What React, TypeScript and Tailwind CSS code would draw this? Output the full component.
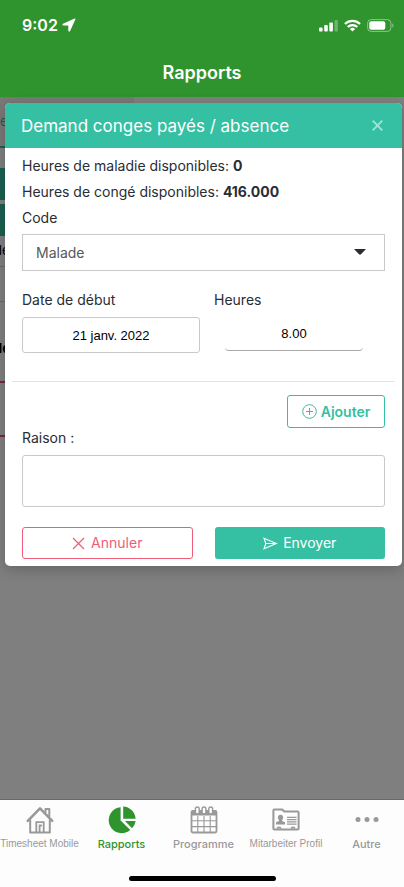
import type { ReactNode } from "react";

const CalendarIcon = () => (
  <svg width="28" height="28" viewBox="0 0 28 28" fill="none" stroke="currentColor">
    <rect x="1.5" y="5" width="25" height="21.5" rx="1.5" strokeWidth="1.8" />
    <path d="M1.5 5h25v4h-25z" fill="currentColor" strokeWidth="1" />
    <path d="M2 14.8h24M2 20.6h24M7.8 10v16M14 10v16M20.2 10v16" strokeWidth="1.1" />
    <g fill="white" strokeWidth="1.4">
      <rect x="5.4" y="1" width="3.8" height="7" rx="1.9" />
      <rect x="12.1" y="1" width="3.8" height="7" rx="1.9" />
      <rect x="18.8" y="1" width="3.8" height="7" rx="1.9" />
    </g>
  </svg>
);

const HouseIcon = () => (
  <svg width="28" height="28" viewBox="0 0 28 28" fill="none" stroke="currentColor" strokeLinejoin="round" strokeLinecap="round">
    <path d="M1.8 14.8 14 2.4l12.2 12.4" strokeWidth="2.6" />
    <path d="M4.2 14v12.4h19.6V14M19.5 6V3h3.8v7.5" strokeWidth="2" />
    <path d="M10.3 26V16.2h7.4V26M13.6 26v-6.5h1.6" strokeWidth="1.8" strokeLinejoin="miter" />
  </svg>
);

const PieIcon = () => (
  <svg width="28" height="28" viewBox="0 0 28 28" fill="currentColor">
    <path d="M12.6 1.2v13.2l9.7 9.5A13 13 0 1 1 12.6 1.2z" />
    <path d="M15.2.6A13 13 0 0 1 27.6 12.8H15.2z" />
    <path d="M17 15h10.6a13 13 0 0 1-3.6 7.3z" />
  </svg>
);

const CardIcon = () => (
  <svg width="28" height="28" viewBox="0 0 28 28" fill="none" stroke="currentColor">
    <path d="M1.4 4.4q0-1 1-1h7.4l2.8 2.2h13q1 0 1 1v15.9q0 1-1 1H2.4q-1 0-1-1z" strokeWidth="2" strokeLinejoin="round" />
    <path d="M15 11.3h9.5M15 13.6h9.5M15 15.9h9.5M15 18.2h9.5" strokeWidth="1.3" />
    <path d="M8.5 8.8c1.7 0 2.6 1.1 2.6 2.7 0 1.2-.5 2-1 2.6v1l3 1.2v2.2H4v-2.2l3-1.2v-1c-.6-.6-1.1-1.4-1.1-2.6 0-1.6.9-2.7 2.6-2.7z" fill="currentColor" stroke="none" />
    <path d="M5 22.5q0-1.5 2-1.5t2 1.5M19 22.5q0-1.5 2-1.5t2 1.5" strokeWidth="1.2" fill="currentColor" />
  </svg>
);

const DotsIcon = () => (
  <svg width="28" height="28" viewBox="0 0 28 28" fill="currentColor">
    <circle cx="5" cy="13.5" r="2.5" />
    <circle cx="14" cy="13.5" r="2.5" />
    <circle cx="23" cy="13.5" r="2.5" />
  </svg>
);

const tabs: { label: string; icon: ReactNode; active?: boolean; long?: boolean }[] = [
  { label: "Timesheet Mobile", icon: <HouseIcon />, long: true },
  { label: "Rapports", icon: <PieIcon />, active: true },
  { label: "Programme", icon: <CalendarIcon /> },
  { label: "Mitarbeiter Profil", icon: <CardIcon />, long: true },
  { label: "Autre", icon: <DotsIcon /> },
];

function StatusBar() {
  return (
    <div className="flex h-[50px] items-center justify-between pr-[10px] pl-[22px]">
      <div className="flex items-center gap-1 text-base leading-5 font-semibold">
        <span>9:02</span>
        <svg width="14" height="14" viewBox="0 0 14 14" fill="currentColor">
          <path d="M12.6.6 1 5.7c-1 .5-.8 1.7.3 1.7h5v5.1c0 1.1 1.3 1.4 1.8.4l5.2-11.4c.4-.8 0-1.3-.7-.9z" />
        </svg>
      </div>
      <div className="flex items-center gap-[6px]">
        <svg width="19" height="13" viewBox="0 0 19 13" fill="currentColor">
          <rect x="0" y="8.5" width="3.6" height="4" rx="1" />
          <rect x="5.2" y="6" width="3.6" height="6.5" rx="1" />
          <rect x="10.3" y="3.5" width="3.6" height="9" rx="1" />
          <rect x="15.5" y="1" width="3.4" height="11.5" rx="1" opacity=".3" />
        </svg>
        <svg width="17" height="13" viewBox="0 0 17 13" fill="none" stroke="currentColor" strokeWidth="2.3">
          <path d="M1 5a10.6 10.6 0 0 1 15 0M3.8 8a6.6 6.6 0 0 1 9.4 0" />
          <path d="M8.5 12.6 5.9 10a3.7 3.7 0 0 1 5.2 0z" fill="currentColor" stroke="none" />
        </svg>
        <svg width="27" height="13" viewBox="0 0 27 13" fill="none">
          <rect x=".6" y=".6" width="23.3" height="11.8" rx="3.6" stroke="white" strokeOpacity=".45" />
          <rect x="2.3" y="2.3" width="16" height="8.4" rx="2" fill="white" />
          <path d="M25.3 4.3c1.5.8 1.5 3.6 0 4.4z" fill="white" fillOpacity=".5" />
        </svg>
      </div>
    </div>
  );
}

function ReportPage() {
  return (
    <div aria-hidden="true" className="flex h-full flex-col overflow-hidden bg-white pr-[7px] text-[13px] leading-5 whitespace-nowrap">
      <div className="flex h-[51px] w-[134px] flex-col justify-end border-b-2 border-[#35bfa3] bg-[#f5efef] pb-[15px] text-[#35bfa3]">e</div>
      <div className="mt-5 h-8 bg-[#35bfa3]" />
      <div className="mt-1 h-8 bg-[#35bfa3]" />
      <div className="h-[31px] border-b border-gray-300 pt-1 -indent-[6px]">de</div>
      <div className="h-[35px] border-b border-gray-300" />
      <div className="h-[81px] border-b-2 border-[#f0506e] pt-9 font-bold -indent-[6px]">de</div>
      <div className="h-[54px] border-b-2 border-[#f0506e]" />
    </div>
  );
}

function AbsenceDialog() {
  return (
    <form
      role="dialog"
      aria-labelledby="dialog-title"
      onSubmit={(e) => e.preventDefault()}
      className="overflow-hidden rounded-[5px] bg-white text-sm leading-[26px] text-[#292d33] shadow-[0_4px_14px_rgba(0,0,0,0.2)]"
    >
      <header className="flex h-[45px] items-center justify-between bg-[#35bfa3] pr-[19px] pl-4 text-white">
        <h2 id="dialog-title" className="text-[17px]">Demand conges payés / absence</h2>
        <button type="button" aria-label="Fermer" className="text-[#a4e1d5]">
          <svg width="11" height="11" viewBox="0 0 11 11" fill="none" stroke="currentColor" strokeWidth="1.9">
            <path d="m.7.7 9.6 9.6M10.3.7.7 10.3" />
          </svg>
        </button>
      </header>

      <div className="px-[17px] pt-[5px]">
        <p>Heures de maladie disponibles: <strong>0</strong></p>
        <p>Heures de congé disponibles: <strong>416.000</strong></p>
        <label htmlFor="code" className="block">Code</label>
        <div className="relative mt-[3px]">
          <select id="code" className="block h-[37px] w-full appearance-none border border-[#c9c9c9] bg-white px-[13px] text-[#55585c]">
            <option>Malade</option>
          </select>
          <svg className="pointer-events-none absolute top-[15px] right-[19px]" width="12" height="6" viewBox="0 0 12 6" fill="#292d33">
            <path d="M0 0h12L7 5.3c-.6.6-1.4.6-2 0z" />
          </svg>
        </div>

        <div className="mt-4 grid grid-cols-[178px_1fr] gap-x-[14px] pb-7">
          <div>
            <label htmlFor="start" className="block">Date de début</label>
            <input id="start" defaultValue="21 janv. 2022" className="mt-1 block h-[36px] w-full rounded-[3px] border border-[#c9c9c9] text-center font-['Liberation_Sans',sans-serif] text-[13px] text-black" />
          </div>
          <div>
            <label htmlFor="hours" className="block">Heures</label>
            <input id="hours" defaultValue="8.00" className="mt-[3px] ml-[11px] block h-[35px] w-[138px] rounded-[4px] border-b border-[#a8a8a8] text-center font-['Liberation_Sans',sans-serif] text-[13px] text-black" />
          </div>
        </div>
      </div>

      <hr className="mx-[7px] border-[#e1e3e5]" />

      <div className="px-[17px] pt-[13px] pb-[7px]">
        <div className="flex justify-end">
          <button type="button" className="flex h-[33px] w-[98px] items-center justify-center gap-1 rounded-[3px] border border-[#35bfa3] font-semibold text-[#35bfa3]">
            <svg width="15" height="15" viewBox="0 0 15 15" fill="none" stroke="currentColor">
              <circle cx="7.5" cy="7.5" r="6.8" />
              <path d="M4 7.5h7M7.5 4v7" />
            </svg>
            Ajouter
          </button>
        </div>
        <label htmlFor="reason" className="-mt-[3px] block">Raison :</label>
        <textarea id="reason" className="mt-1 block h-[52px] w-full resize-none rounded-[3px] border border-[#c9c9c9]" />
        <div className="mt-5 grid grid-cols-2 gap-[22px]">
          <button type="button" className="flex h-8 items-center justify-center gap-[6px] rounded-[3px] border border-[#f05d78] text-[#f05d78]">
            <svg width="13" height="13" viewBox="0 0 13 13" fill="none" stroke="currentColor" strokeWidth="1.2">
              <path d="m1 1 11 11M12 1 1 12" />
            </svg>
            Annuler
          </button>
          <button type="submit" className="flex h-8 items-center justify-center gap-[5px] rounded-[3px] bg-[#35bfa3] text-white">
            <svg width="15" height="13" viewBox="0 0 15 13" fill="none" stroke="currentColor" strokeWidth="1.1">
              <path d="M1 1.2 13.4 6.5 1 11.8l1.8-5.3zM2.8 6.5h10" />
            </svg>
            Envoyer
          </button>
        </div>
      </div>
    </form>
  );
}

export default function App() {
  return (
    <div className="flex h-screen flex-col bg-[#fdfdfd] font-['Inter',sans-serif]">
      <header className="h-[97px] bg-[#2f942d] text-white">
        <StatusBar />
        <h1 className="pt-[11px] text-center text-lg leading-6 font-semibold">Rapports</h1>
      </header>

      <main className="relative min-h-0 flex-1">
        <ReportPage />
        <div className="absolute inset-0 bg-black/50 pt-[6px] pr-[2px] pl-[5px]">
          <AbsenceDialog />
        </div>
      </main>

      <nav className="border-t border-[#2f942d]">
        <div className="grid grid-cols-[79px_85px_79px_86px_1fr] pt-[6px]">
          {tabs.map((tab) => (
            <button
              key={tab.label}
              type="button"
              aria-current={tab.active ? "page" : undefined}
              className={`flex flex-col items-center gap-[3px] leading-[14px] whitespace-nowrap ${tab.long ? "font-['Liberation_Sans',sans-serif] text-[10px]" : "text-[11px] font-medium"} ${tab.active ? "text-[#2f942d]" : "text-[#999999]"}`}
            >
              {tab.icon}
              <span>{tab.label}</span>
            </button>
          ))}
        </div>
        <div className="mx-auto mt-[25px] mb-[6px] h-[5px] w-[147px] rounded-full bg-black" />
      </nav>
    </div>
  );
}
